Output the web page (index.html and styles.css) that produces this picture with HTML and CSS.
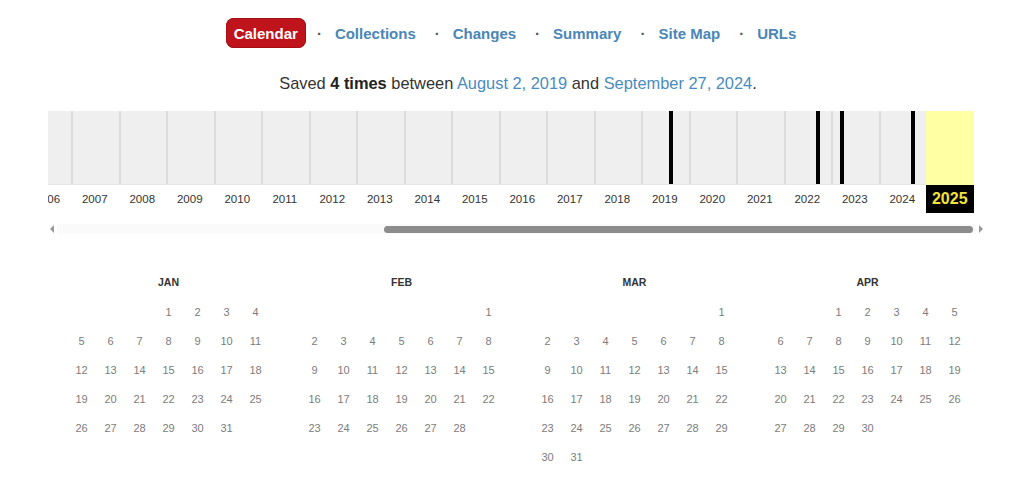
FILE: index.html
```html
<!DOCTYPE html>
<html lang="en">
<head>
<meta charset="utf-8">
<title>Calendar</title>
<link rel="stylesheet" href="styles.css">
</head>
<body>
<nav class="nav">
  <a class="nav-item active">Calendar</a><span class="sep">·</span>
  <a class="nav-item">Collections</a><span class="sep">·</span>
  <a class="nav-item">Changes</a><span class="sep">·</span>
  <a class="nav-item">Summary</a><span class="sep">·</span>
  <a class="nav-item">Site Map</a><span class="sep">·</span>
  <a class="nav-item">URLs</a>
</nav>

<p class="saved">Saved <b>4 times</b> between <a class="lnk">August 2, 2019</a> and <a class="lnk">September 27, 2024</a>.</p>

<div class="timeline">
  <div class="strip">
    <div class="year"><div class="bar"></div><div class="ylabel">2006</div></div>
    <div class="year"><div class="bar"></div><div class="ylabel">2007</div></div>
    <div class="year"><div class="bar"></div><div class="ylabel">2008</div></div>
    <div class="year"><div class="bar"></div><div class="ylabel">2009</div></div>
    <div class="year"><div class="bar"></div><div class="ylabel">2010</div></div>
    <div class="year"><div class="bar"></div><div class="ylabel">2011</div></div>
    <div class="year"><div class="bar"></div><div class="ylabel">2012</div></div>
    <div class="year"><div class="bar"></div><div class="ylabel">2013</div></div>
    <div class="year"><div class="bar"></div><div class="ylabel">2014</div></div>
    <div class="year"><div class="bar"></div><div class="ylabel">2015</div></div>
    <div class="year"><div class="bar"></div><div class="ylabel">2016</div></div>
    <div class="year"><div class="bar"></div><div class="ylabel">2017</div></div>
    <div class="year"><div class="bar"></div><div class="ylabel">2018</div></div>
    <div class="year"><div class="bar"><span class="mark" style="left:26.3px"></span></div><div class="ylabel">2019</div></div>
    <div class="year"><div class="bar"></div><div class="ylabel">2020</div></div>
    <div class="year"><div class="bar"></div><div class="ylabel">2021</div></div>
    <div class="year"><div class="bar"><span class="mark" style="left:30.2px"></span></div><div class="ylabel">2022</div></div>
    <div class="year"><div class="bar"><span class="mark" style="left:6.7px"></span></div><div class="ylabel">2023</div></div>
    <div class="year"><div class="bar"><span class="mark" style="left:30.2px"></span></div><div class="ylabel">2024</div></div>
    <div class="year current"><div class="bar"></div><div class="ylabel">2025</div></div>
  </div>
</div>

<div class="scroller">
  <span class="arrow arrow-left"></span>
  <div class="track"><div class="thumb"></div></div>
  <span class="arrow arrow-right"></span>
</div>

<div class="months">
  <div class="month">
    <div class="mtitle">JAN</div>
    <div class="days">
      <span></span><span></span><span></span><span>1</span><span>2</span><span>3</span><span>4</span>
      <span>5</span><span>6</span><span>7</span><span>8</span><span>9</span><span>10</span><span>11</span>
      <span>12</span><span>13</span><span>14</span><span>15</span><span>16</span><span>17</span><span>18</span>
      <span>19</span><span>20</span><span>21</span><span>22</span><span>23</span><span>24</span><span>25</span>
      <span>26</span><span>27</span><span>28</span><span>29</span><span>30</span><span>31</span>
    </div>
  </div>
  <div class="month">
    <div class="mtitle">FEB</div>
    <div class="days">
      <span></span><span></span><span></span><span></span><span></span><span></span><span>1</span>
      <span>2</span><span>3</span><span>4</span><span>5</span><span>6</span><span>7</span><span>8</span>
      <span>9</span><span>10</span><span>11</span><span>12</span><span>13</span><span>14</span><span>15</span>
      <span>16</span><span>17</span><span>18</span><span>19</span><span>20</span><span>21</span><span>22</span>
      <span>23</span><span>24</span><span>25</span><span>26</span><span>27</span><span>28</span>
    </div>
  </div>
  <div class="month">
    <div class="mtitle">MAR</div>
    <div class="days">
      <span></span><span></span><span></span><span></span><span></span><span></span><span>1</span>
      <span>2</span><span>3</span><span>4</span><span>5</span><span>6</span><span>7</span><span>8</span>
      <span>9</span><span>10</span><span>11</span><span>12</span><span>13</span><span>14</span><span>15</span>
      <span>16</span><span>17</span><span>18</span><span>19</span><span>20</span><span>21</span><span>22</span>
      <span>23</span><span>24</span><span>25</span><span>26</span><span>27</span><span>28</span><span>29</span>
      <span>30</span><span>31</span>
    </div>
  </div>
  <div class="month">
    <div class="mtitle">APR</div>
    <div class="days">
      <span></span><span></span><span>1</span><span>2</span><span>3</span><span>4</span><span>5</span>
      <span>6</span><span>7</span><span>8</span><span>9</span><span>10</span><span>11</span><span>12</span>
      <span>13</span><span>14</span><span>15</span><span>16</span><span>17</span><span>18</span><span>19</span>
      <span>20</span><span>21</span><span>22</span><span>23</span><span>24</span><span>25</span><span>26</span>
      <span>27</span><span>28</span><span>29</span><span>30</span>
    </div>
  </div>
</div>
</body>
</html>
```

FILE: styles.css
```css
* { box-sizing: border-box; }

html, body {
  margin: 0;
  padding: 0;
  background: #ffffff;
  font-family: "Liberation Sans", Arial, sans-serif;
  color: #333333;
  overflow: hidden;
}

.nav {
  display: flex;
  justify-content: center;
  align-items: center;
  margin-top: 18px;
  height: 30px;
  padding-left: 6px;
}

.nav-item {
  display: block;
  padding: 0 8px;
  height: 30px;
  line-height: 31px;
  font-size: 15px;
  font-weight: bold;
  color: #4a86b6;
  text-decoration: none;
}

.nav-item.active {
  background: #c0141c;
  color: #ffffff;
  border-radius: 8px;
  box-shadow: inset 0 0 0 1px #a50f16;
}

.sep {
  display: block;
  margin: 0 5px 0 11px;
  font-size: 15px;
  font-weight: bold;
  color: #555555;
  line-height: 31px;
}

.saved {
  margin: 25px 0 0 0;
  padding-left: 12px;
  text-align: center;
  font-size: 16.4px;
  line-height: 20px;
  color: #333333;
}

.saved b { color: #222222; }

.lnk {
  color: #4a8cc0;
  text-decoration: none;
}

.timeline {
  margin: 18px 0 0 48px;
  width: 926px;
  overflow: hidden;
}

.strip {
  display: flex;
  margin-left: -24.5px;
}

.year {
  flex: none;
  width: 47.5px;
}

.bar {
  position: relative;
  height: 74px;
  background: #efefef;
  border-left: 2px solid #dcdcdc;
  border-bottom: 1px solid #e6e6e6;
}

.ylabel {
  height: 28px;
  line-height: 28px;
  text-align: center;
  font-size: 11.5px;
  color: #333333;
}

.current .bar {
  background: #ffffa4;
  border-left: none;
  border-bottom: none;
}

.current .ylabel {
  background: #000000;
  color: #f1e33a;
  font-size: 16px;
  font-weight: bold;
}

.mark {
  position: absolute;
  top: 0;
  bottom: 0;
  width: 4px;
  background: #000000;
}

.scroller {
  display: flex;
  align-items: center;
  margin: 11px 0 0 47px;
  height: 10px;
}

.arrow {
  flex: none;
  width: 10px;
  height: 10px;
  display: flex;
  align-items: center;
  justify-content: center;
}

.arrow::before {
  content: "";
  display: block;
  width: 0;
  height: 0;
  border-top: 4px solid transparent;
  border-bottom: 4px solid transparent;
}

.arrow-left::before { border-right: 4px solid #999999; }
.arrow-right::before { border-left: 4px solid #999999; }

.track {
  width: 919px;
  height: 10px;
  background: #fafafa;
  display: flex;
  align-items: center;
}

.thumb {
  margin-left: 327px;
  width: 589px;
  height: 7px;
  border-radius: 4px;
  background: #8c8c8c;
}

.months {
  display: flex;
  gap: 30px;
  margin: 36px 0 0 67px;
}

.month {
  width: 203px;
}

.mtitle {
  height: 24px;
  line-height: 24px;
  text-align: center;
  font-size: 10.5px;
  font-weight: bold;
  color: #333333;
}

.days {
  margin-top: 3px;
  display: grid;
  grid-template-columns: repeat(7, 29px);
  grid-auto-rows: 29px;
}

.days span {
  display: flex;
  align-items: center;
  justify-content: center;
  font-size: 11px;
  color: #7c7c7c;
}
```
